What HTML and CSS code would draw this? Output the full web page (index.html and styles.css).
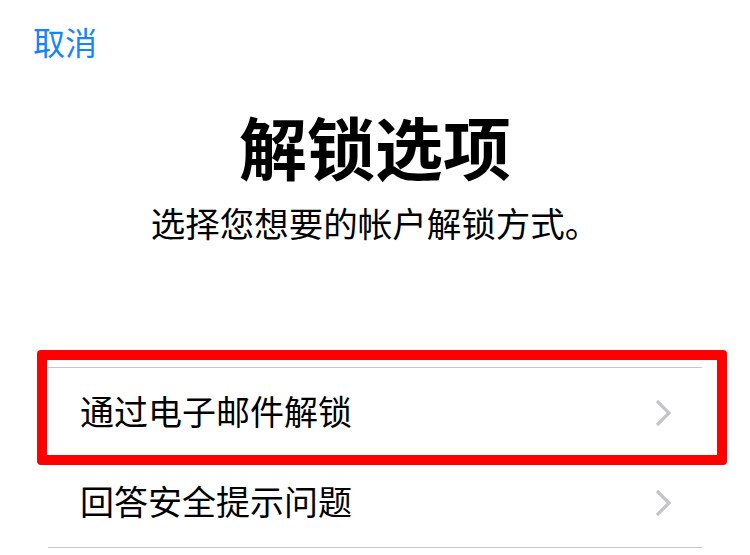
FILE: index.html
```html
<!DOCTYPE html>
<html lang="zh-CN">
<head>
<meta charset="utf-8">
<link rel="stylesheet" href="styles.css">
</head>
<body>
<div class="page">
  <div class="nav"><span class="cancel">取消</span></div>
  <h1 class="title">解锁选项</h1>
  <p class="subtitle">选择您想要的帐户解锁方式。</p>
  <ul class="list">
    <li class="row"><span class="label">通过电子邮件解锁</span>
      <svg class="chev" width="20" height="28" viewBox="0 0 20 28"><path d="M3 2 L15 14 L3 26" fill="none" stroke="#c5c5c7" stroke-width="3.2"/></svg>
    </li>
    <li class="row"><span class="label">回答安全提示问题</span>
      <svg class="chev" width="20" height="28" viewBox="0 0 20 28"><path d="M3 2 L15 14 L3 26" fill="none" stroke="#c5c5c7" stroke-width="3.2"/></svg>
    </li>
  </ul>
  <div class="highlight"></div>
</div>
</body>
</html>
```
FILE: styles.css
```css
html, body {
  margin: 0;
  padding: 0;
  background: #ffffff;
}
body {
  font-family: "Noto Sans CJK SC", "Noto Sans", sans-serif;
  color: #000;
}
.page {
  position: relative;
  width: 750px;
  height: 555px;
  overflow: hidden;
}
.nav {
  padding: 25px 0 0 33px;
  height: 40px;
}
.cancel {
  font-size: 32px;
  line-height: 32px;
  color: #1485fe;
}
.title {
  margin: 47px 0 0 0;
  font-size: 68px;
  line-height: 68px;
  font-weight: 700;
  text-align: center;
}
.subtitle {
  margin: 25px 0 0 0;
  font-size: 34.5px;
  line-height: 35px;
  text-align: center;
}
.list {
  list-style: none;
  margin: 127px 48px 0 48px;
  padding: 0;
  border-top: 1px solid #c8c8c8;
}
.row {
  height: 89px;
  display: flex;
  align-items: center;
  justify-content: space-between;
  padding: 0 28px 0 32px;
  border-bottom: 1px solid #c8c8c8;
}
.label {
  font-size: 34px;
  line-height: 34px;
  margin-top: -4px;
}
.chev {
  display: block;
}
.highlight {
  position: absolute;
  left: 37px;
  top: 350px;
  width: 670px;
  height: 95px;
  border: 10px solid #ff0000;
  border-radius: 4px;
}
```
